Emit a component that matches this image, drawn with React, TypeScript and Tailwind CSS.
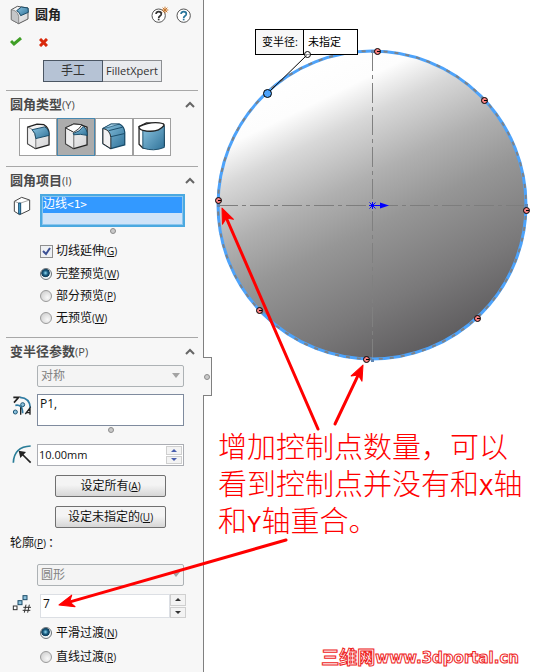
import type { ReactNode } from 'react'
import { clsx } from 'clsx'

const CONTROL_POINTS = [
  { x: 377, y: 51 },
  { x: 484, y: 100 },
  { x: 526, y: 210 },
  { x: 477, y: 318 },
  { x: 366, y: 359 },
  { x: 259, y: 310 },
  { x: 218, y: 200 },
]

const ARROWS = [
  { x1: 318, y1: 429, x2: 222, y2: 208 },
  { x1: 335, y1: 424, x2: 363, y2: 365 },
  { x1: 286, y1: 540, x2: 59, y2: 605 },
]

/* ---------- icons ---------- */

function Gradients() {
  return (
    <svg className="absolute h-0 w-0" aria-hidden="true">
      <defs>
        <linearGradient id="blueFace" x1="0" y1="0" x2="1" y2="1">
          <stop offset="0" stopColor="#8cc4e0" />
          <stop offset="1" stopColor="#2f7299" />
        </linearGradient>
        <linearGradient id="bodyFace" x1="0" y1="0" x2="1" y2="1">
          <stop offset="0" stopColor="#ffffff" />
          <stop offset="1" stopColor="#d2d2d4" />
        </linearGradient>
      </defs>
    </svg>
  )
}

function FilletIcon() {
  return (
    <svg width="20" height="20" viewBox="0 0 60 60" strokeLinejoin="round">
      <path d="M4 14L22 4L54 9L54 42L26 56L4 44Z" fill="url(#bodyFace)" stroke="#5a5a5a" strokeWidth="3" />
      <path d="M4 14Q22 16 26 34L26 56L4 44Z" fill="#c4c6c8" stroke="#6a6a6a" strokeWidth="2" />
      <path d="M20 17L34 6L54 9L55 22L32 32Q29 21 20 17Z" fill="url(#blueFace)" stroke="#1c4c68" strokeWidth="3" />
    </svg>
  )
}

function ConstantIcon() {
  return (
    <svg width="36" height="36" viewBox="0 0 114 114" strokeLinejoin="round">
      <path d="M24 26L54 16L76 18Q92 28 92 46L92 82L50 94L24 78Z" fill="url(#bodyFace)" stroke="#222" strokeWidth="4" />
      <path d="M24 26Q46 30 50 60L50 94L24 78Z" fill="#f0f0f1" stroke="#333" strokeWidth="2" />
      <path d="M38 34L78 25Q92 32 92 52L50 62Q50 44 38 34Z" fill="url(#blueFace)" stroke="#174a68" strokeWidth="3" />
    </svg>
  )
}

function VariableIcon() {
  return (
    <svg width="36" height="36" viewBox="0 0 114 114" strokeLinejoin="round">
      <path d="M24 28L50 16L70 18L92 26L92 82L50 94L24 78Z" fill="url(#bodyFace)" stroke="#222" strokeWidth="4" />
      <path d="M24 28L50 42L50 94L24 78Z" fill="#ededee" stroke="#222" strokeWidth="2" />
      <path d="M24 28L50 16L76 18Q68 32 50 42Z" fill="#fff" stroke="#333" strokeWidth="3" />
      <path d="M48 46Q70 40 80 24Q92 30 93 52Q70 46 50 50Z" fill="url(#blueFace)" stroke="#174a68" strokeWidth="3" />
    </svg>
  )
}

function FaceIcon() {
  return (
    <svg width="36" height="36" viewBox="0 0 114 114" strokeLinejoin="round">
      <path d="M22 30L48 16L74 16Q90 24 91 42L91 82L47 94L22 78Z" fill="url(#blueFace)" stroke="#174a68" strokeWidth="4" />
      <path d="M22 30Q44 34 47 58L47 94L22 78Z" fill="#f2f2f3" stroke="#222" strokeWidth="3" />
      <path d="M22 30L48 16L74 16L38 27Z" fill="#a6d1e7" stroke="#174a68" strokeWidth="2" />
      <path d="M40 37L84 26M47 56L91 46" stroke="#174a68" strokeWidth="3" />
    </svg>
  )
}

function FullRoundIcon() {
  return (
    <svg width="36" height="36" viewBox="0 0 114 114" strokeLinejoin="round">
      <path d="M16 24L40 12L94 16L96 84L28 92L16 80Z" fill="#fff" stroke="#222" strokeWidth="4" />
      <path d="M28 36Q62 46 96 22L96 90Q62 104 28 92Z" fill="url(#blueFace)" stroke="#174a68" strokeWidth="3" />
      <path d="M16 24Q16 34 28 36Q76 46 95 20Q96 14 80 12Q50 8 16 24Z" fill="#fff" stroke="#222" strokeWidth="4" />
    </svg>
  )
}

function EdgeIcon() {
  return (
    <svg width="18" height="20" viewBox="0 0 54 60" strokeLinejoin="round">
      <path d="M4 16L26 4L50 12L50 42L20 56L4 46Z" fill="#fff" stroke="#444" strokeWidth="3" />
      <path d="M4 16L20 22L50 12M20 22V56" fill="none" stroke="#777" strokeWidth="2" />
      <path d="M17 21L23 21L23 54L17 54Z" fill="#4fa6d4" stroke="#164c70" strokeWidth="3" />
    </svg>
  )
}

function AttachedRadiiIcon() {
  return (
    <svg width="20" height="20" viewBox="0 0 60 60" fill="none">
      <path d="M4 4H20L6 20" stroke="#222" strokeWidth="5" />
      <path d="M24 4Q54 6 55 36" stroke="#2f7ba3" strokeWidth="5" />
      <path d="M10 28Q32 24 32 52" stroke="#2f7ba3" strokeWidth="5" />
      <circle cx="32" cy="26" r="6" fill="#8bc0dc" stroke="#1c5675" strokeWidth="3" />
      <circle cx="10" cy="48" r="6" fill="#8bc0dc" stroke="#1c5675" strokeWidth="3" />
      <path d="M26 34V56M40 54L54 36V56M42 50H56" stroke="#222" strokeWidth="4" />
    </svg>
  )
}

function RadiusIcon() {
  return (
    <svg width="20" height="20" viewBox="0 0 60 60" fill="none">
      <path d="M4 56Q6 8 56 6" stroke="#2a7d98" strokeWidth="5" />
      <path d="M30 30L56 56" stroke="#222" strokeWidth="5" />
      <path d="M20 20L42 24L25 42Z" fill="#222" />
    </svg>
  )
}

function InstanceCountIcon() {
  return (
    <svg width="20" height="20" viewBox="0 0 60 60" fill="none" strokeWidth="3">
      <rect x="4" y="36" width="11" height="11" fill="#fff" stroke="#333" />
      <rect x="18" y="20" width="12" height="12" fill="#8bc0dc" stroke="#1c4c68" />
      <rect x="33" y="5" width="12" height="12" fill="#8bc0dc" stroke="#1c4c68" />
      <path d="M42 32L37 56M52 32L47 56M34 40H57M32 49H55" stroke="#333" />
    </svg>
  )
}

function HelpIcon({ whatsNew }: { whatsNew?: boolean }) {
  const ink = whatsNew ? '#333333' : '#28759b'
  return (
    <svg width="18" height="18" viewBox="0 0 54 54" fill="none">
      <circle cx="23" cy="29" r="20" fill="#fff" stroke="#555" strokeWidth="3" />
      <path d="M15 24Q16 17 23 17Q31 17 31 24Q31 28 27 30Q23 33 23 36" stroke={ink} strokeWidth="5" />
      <path d="M23 38V43" stroke={ink} strokeWidth="5" />
      {whatsNew && (
        <path d="M42 2V22M32 12H52M35 5L49 19M49 5L35 19" stroke="#c9772a" strokeWidth="3" />
      )}
    </svg>
  )
}

function Grip() {
  return (
    <div className="flex h-2 items-center justify-center">
      <span className="h-[6px] w-[6px] rounded-full border border-[#8c8c8c] bg-[#c9c9c9]" />
    </div>
  )
}

/* ---------- panel parts ---------- */

function Key({ children }: { children: string }) {
  return (
    <span className="text-[10px]">
      (<u className="underline-offset-1">{children}</u>)
    </span>
  )
}

function Section({ title, hotkey, children }: { title: string; hotkey: string; children: ReactNode }) {
  return (
    <section className="ml-[6px] mr-[5px] border-t border-[#a8a8a8]">
      <h2>
        <button className="flex h-[27px] w-full items-center justify-between pl-1 pr-[3px] text-[13px] font-bold text-[#4a4a4a]">
          <span>
            {title}
            <span className="text-[11px] font-medium">({hotkey})</span>
          </span>
          <svg width="10" height="7" viewBox="0 0 10 7" fill="none" stroke="#666" strokeWidth="2">
            <path d="M1 6L5 2L9 6" />
          </svg>
        </button>
      </h2>
      {children}
    </section>
  )
}

function Radio({ name, label, hotkey, checked }: { name: string; label: string; hotkey: string; checked?: boolean }) {
  return (
    <label className="flex h-[22px] items-center gap-1">
      <input
        type="radio"
        name={name}
        defaultChecked={checked}
        className="h-3 w-3 appearance-none rounded-full border border-[#9a9a9a] bg-[radial-gradient(circle_at_65%_65%,#f8f8f8,#c8c8c8)] checked:border-[#6c7378] checked:bg-[radial-gradient(circle_at_45%_40%,#8fdcf7_0,#17587c_30%,#123f5c_48%,#eef2f4_56%)]"
      />
      <span>
        {label}
        <Key>{hotkey}</Key>
      </span>
    </label>
  )
}

function DisabledSelect({ label, value }: { label: string; value: string }) {
  return (
    <div className="relative">
      <select
        disabled
        aria-label={label}
        className="block h-[22px] w-full appearance-none rounded-[2px] border border-[#adb2b5] bg-[#f4f4f4] px-[3px] text-[12px] leading-5 text-[#838383] opacity-100"
      >
        <option>{value}</option>
      </select>
      <svg className="pointer-events-none absolute right-1 top-2" width="8" height="5" viewBox="0 0 8 5">
        <path d="M0 0H8L4 5Z" fill="#a3a3a3" />
      </svg>
    </div>
  )
}

function SpinButtons({ label, tone }: { label: string; tone: string }) {
  return (
    <span className={clsx('flex w-4 shrink-0 flex-col gap-px', tone)}>
      {['M0 3H6L3 0Z', 'M0 0H6L3 3Z'].map((d, i) => (
        <button
          key={d}
          aria-label={`${label} ${i === 0 ? '+' : '-'}`}
          className="flex flex-1 items-center justify-center border border-[#cfcfcf] bg-[#f3f3f3]"
        >
          <svg width="6" height="3" viewBox="0 0 6 3" fill="currentColor">
            <path d={d} />
          </svg>
        </button>
      ))}
    </span>
  )
}

function PushButton({ label, hotkey }: { label: string; hotkey: string }) {
  return (
    <button className="mx-[18px] h-[22px] rounded-[2px] border border-[#707070] bg-linear-to-b from-[#f4f4f4] from-45% to-[#d6d6d6] text-[12px] leading-5">
      {label}
      <Key>{hotkey}</Key>
    </button>
  )
}

const FILLET_TYPES = [
  { name: '恒定大小圆角', icon: <ConstantIcon /> },
  { name: '变量大小圆角', icon: <VariableIcon />, active: true },
  { name: '面圆角', icon: <FaceIcon /> },
  { name: '完整圆角', icon: <FullRoundIcon /> },
]

function PropertyPanel() {
  return (
    <aside className="relative w-[204px] shrink-0 border-r border-[#808080] bg-[#f7f7f7] pb-1 text-[12px] text-[#111]">
      <header className="flex h-[30px] items-center pl-[10px] pr-[9px]">
        <FilletIcon />
        <h1 className="ml-[5px] flex-1 text-[13px] font-bold text-[#222]">圆角</h1>
        <button aria-label="新增功能" className="mr-[7px]">
          <HelpIcon whatsNew />
        </button>
        <button aria-label="帮助">
          <HelpIcon />
        </button>
      </header>
      <div className="flex h-6 items-center gap-[17px] pl-[10px]">
        <button aria-label="确定">
          <svg width="12" height="10" viewBox="0 0 12 10" fill="none" stroke="#3f9f26" strokeWidth="3">
            <path d="M1 4L4 7L11 1" />
          </svg>
        </button>
        <button aria-label="取消">
          <svg width="9" height="9" viewBox="0 0 9 9" fill="none" stroke="#d9290b" strokeWidth="3">
            <path d="M1 1L8 8M8 1L1 8" />
          </svg>
        </button>
      </div>
      <div className="mb-2 ml-[43px] mr-[41px] mt-[6px] flex h-[22px] text-[12px] leading-5">
        <button className="flex-1 border border-[#4b5663] bg-[#b6c3d5] text-[#333]">手工</button>
        <button className="flex-1 border border-l-0 border-[#8d8f92] bg-[#e9ebee] text-[11px] text-[#333]">FilletXpert</button>
      </div>

      <Section title="圆角类型" hotkey="Y">
        <div className="flex pb-[10px] pl-[13px]">
          {FILLET_TYPES.map((type) => (
            <button
              key={type.name}
              aria-label={type.name}
              className={clsx(
                'flex h-[38px] w-[38px] items-center justify-center border',
                type.active ? 'border-[#4788b0] bg-[#acacac]' : 'border-[#a0a0a0] bg-white',
              )}
            >
              {type.icon}
            </button>
          ))}
        </div>
      </Section>

      <Section title="圆角项目" hotkey="I">
        <div className="flex pl-[7px] pr-[13px]">
          <div className="w-[27px] pt-[2px]">
            <EdgeIcon />
          </div>
          <div className="flex-1">
            <ul role="listbox" aria-label="边线" className="h-[33px] border-2 border-[#4ba9e0] bg-[#cfe3f8] outline-1 -outline-offset-3 outline-[#8cc6ee]">
              <li role="option" aria-selected="true" className="h-[17px] bg-[#3399ff] pl-px leading-4 text-white">
                边线<span className="font-['DejaVu_Sans_Mono'] text-[11px]">&lt;1&gt;</span>
              </li>
            </ul>
            <Grip />
          </div>
        </div>
        <div className="pb-2 pl-[34px]">
          <label className="mb-[2px] mt-[6px] flex h-5 items-center gap-[3px]">
            <span className="relative h-[13px] w-[13px]">
              <input
                type="checkbox"
                defaultChecked
                className="peer block h-[13px] w-[13px] appearance-none border border-[#8e8f8f] bg-[#eef0f3]"
              />
              <svg className="pointer-events-none absolute left-0 top-0 hidden peer-checked:block" width="13" height="13" viewBox="0 0 13 13" fill="none" stroke="#3a4f93" strokeWidth="2">
                <path d="M3 6L6 9L10 3" />
              </svg>
            </span>
            <span>
              切线延伸<Key>G</Key>
            </span>
          </label>
          <Radio name="preview" label="完整预览" hotkey="W" checked />
          <Radio name="preview" label="部分预览" hotkey="P" />
          <Radio name="preview" label="无预览" hotkey="W" />
        </div>
      </Section>

      <Section title="变半径参数" hotkey="P">
        <div className="flex flex-col pl-[31px] pr-[14px]">
          <DisabledSelect label="对称方式" value="对称" />
          <div className="-ml-[25px] mt-[7px] flex">
            <div className="w-[25px] pt-[2px]">
              <AttachedRadiiIcon />
            </div>
            <div className="flex-1">
              <textarea
                aria-label="附加的半径"
                defaultValue="P1,"
                className="block h-8 w-full resize-none border border-[#7f8b9e] bg-white px-[2px] text-[12px] leading-[18px]"
              />
              <Grip />
            </div>
          </div>
          <div className="-ml-[25px] mt-[10px] flex">
            <div className="w-[25px]">
              <RadiusIcon />
            </div>
            <div className="flex h-[22px] flex-1 border border-[#abadb3] bg-white p-px">
              <input aria-label="半径" defaultValue="10.00mm" className="w-0 flex-1 text-[11px] leading-4" />
              <SpinButtons label="半径" tone="text-[#4a5fae]" />
            </div>
          </div>
          <div className="mt-[9px] flex flex-col gap-[9px]">
            <PushButton label="设定所有" hotkey="A" />
            <PushButton label="设定未指定的" hotkey="U" />
          </div>
          <p className="-ml-[27px] mb-[11px] mt-[5px] h-5 leading-5">
            轮廓<Key>P</Key>
            <span className="ml-[2px]">：</span>
          </p>
          <DisabledSelect label="轮廓" value="圆形" />
          <div className="-ml-[25px] mt-2 flex">
            <div className="w-7">
              <InstanceCountIcon />
            </div>
            <div className="-mr-[2px] flex h-6 flex-1">
              <input
                type="text"
                aria-label="实例数"
                defaultValue="7"
                className="w-0 flex-1 border border-[#dcdfe4] bg-white px-[2px] pb-1 text-[12px]"
              />
              <SpinButtons label="实例数" tone="text-[#333]" />
            </div>
          </div>
        </div>
        <div className="flex flex-col gap-[2px] pl-[34px] pt-1">
          <Radio name="transition" label="平滑过渡" hotkey="N" checked />
          <Radio name="transition" label="直线过渡" hotkey="R" />
        </div>
      </Section>

      {/* collapse handle on the splitter */}
      <button
        aria-label="折叠面板"
        className="absolute -right-[9px] top-[357px] flex h-[39px] w-[9px] items-center justify-center border border-l-0 border-[#808080] bg-[#f7f7f7]"
      >
        <span className="h-[6px] w-[6px] rounded-full border border-[#8c8c8c] bg-[#c9c9c9]" />
      </button>
    </aside>
  )
}

/* ---------- graphics area ---------- */

function Model() {
  return (
    <svg className="block" width="334" height="380" viewBox="204 0 334 380" fill="none" role="img" aria-label="圆角预览">
      <defs>
        <linearGradient id="shade" gradientUnits="userSpaceOnUse" x1="290" y1="72" x2="430" y2="360">
          <stop offset="0" stopColor="#ffffff" />
          <stop offset="0.12" stopColor="#fdfdfd" />
          <stop offset="0.23" stopColor="#d8d8d8" />
          <stop offset="0.4" stopColor="#b0b0b0" />
          <stop offset="0.55" stopColor="#969696" />
          <stop offset="0.78" stopColor="#7a797a" />
          <stop offset="1" stopColor="#5a585a" />
        </linearGradient>
      </defs>
      <circle cx="372" cy="205" r="154" fill="url(#shade)" />
      <path d="M218 205.5H527" stroke="#7d7d7d" strokeDasharray="20 4 4 4" />
      <path d="M372.5 51V360" stroke="#808080" strokeDasharray="20 4 4 4" />
      <circle cx="372" cy="205" r="154" stroke="#4da3fb" strokeWidth="3" />
      <circle cx="372" cy="205" r="154" stroke="#7d8288" strokeWidth="2" strokeDasharray="4 7" />
      <path d="M371 51.5H374M218.5 204V207M526.5 204V207M371 360.5H374" stroke="#5f87b5" strokeWidth="3" />
      {CONTROL_POINTS.map((p) => (
        <g key={`${p.x}-${p.y}`}>
          <circle cx={p.x + 0.5} cy={p.y + 0.5} r="3" fill="#f98080" stroke="#000" />
          <path d={`M${p.x} ${p.y + 0.5}h3`} stroke="#000" />
        </g>
      ))}
      <path d="M369 205.5H376M372.5 202V209M369.5 202.5L375.5 208.5M375.5 202.5L369.5 208.5M376 205.5H382" stroke="#0000ff" />
      <path d="M380 202.5L389 205.5L380 208.5Z" fill="#0000ff" />
      <path d="M307 55L268 93" stroke="#000" />
      <circle cx="267.5" cy="93.5" r="4" fill="#4da3fb" stroke="#000" />
    </svg>
  )
}

function Callout() {
  return (
    <div className="absolute left-[51px] top-[29px] flex h-[26px] w-[103px] border border-black bg-white text-[11px] leading-6 text-black">
      <label htmlFor="vertex-radius" className="w-12 border-r border-black bg-[#f7f7f7] pl-[6px]">变半径:</label>
      <input id="vertex-radius" defaultValue="未指定" className="w-0 flex-1 pl-1" />
      <span className="absolute -bottom-1 left-[48px] h-[7px] w-[7px] rounded-full border border-black bg-white/60" />
    </div>
  )
}

function Arrows() {
  return (
    <svg className="pointer-events-none absolute left-0 top-0" width="538" height="672" viewBox="0 0 538 672" aria-hidden="true">
      {ARROWS.map(({ x1, y1, x2, y2 }) => {
        const angle = (Math.atan2(y2 - y1, x2 - x1) * 180) / Math.PI
        const length = Math.hypot(x2 - x1, y2 - y1)
        return (
          <g key={x1} transform={`translate(${x2} ${y2}) rotate(${angle})`} stroke="#ff0000" fill="#ff0000">
            <path d={`M${-length} 0H-6`} strokeWidth="3" strokeLinecap="round" />
            <path d="M0 0L-15 -6L-11 0L-15 6Z" strokeWidth="1" strokeLinejoin="round" />
          </g>
        )
      })}
    </svg>
  )
}

function AxisLetter({ children }: { children: string }) {
  return <span className="font-['Liberation_Mono'] text-[24px] leading-none">{children}</span>
}

export default function App() {
  return (
    <div className="relative flex min-h-screen overflow-hidden bg-white font-['Open_Sans','Noto_Sans_CJK_SC',sans-serif]">
      <Gradients />
      <PropertyPanel />
      <main className="relative flex min-w-0 flex-1 flex-col">
        <Model />
        <Callout />
        <div className="mt-[47px] whitespace-nowrap pl-[14px] font-['Noto_Sans_CJK_SC',sans-serif] text-[29px] font-light leading-[37px] text-[#ff0000]">
          <p>增加控制点数量，可以</p>
          <p>
            看到控制点并没有和<AxisLetter>X</AxisLetter>轴
          </p>
          <p>
            和<AxisLetter>Y</AxisLetter>轴重合。
          </p>
        </div>
        <footer className="mt-auto flex justify-end pb-[5px] pr-[19px]">
          <a
            href="#"
            className="flex items-center whitespace-nowrap font-['DejaVu_Sans','Noto_Sans_CJK_SC',sans-serif] text-[15px] font-bold leading-[18px] text-white [-webkit-text-stroke:1px_#ee2222]"
          >
            <span className="text-[18px]">三维网</span>www.3dportal.cn
          </a>
        </footer>
      </main>
      <Arrows />
    </div>
  )
}
